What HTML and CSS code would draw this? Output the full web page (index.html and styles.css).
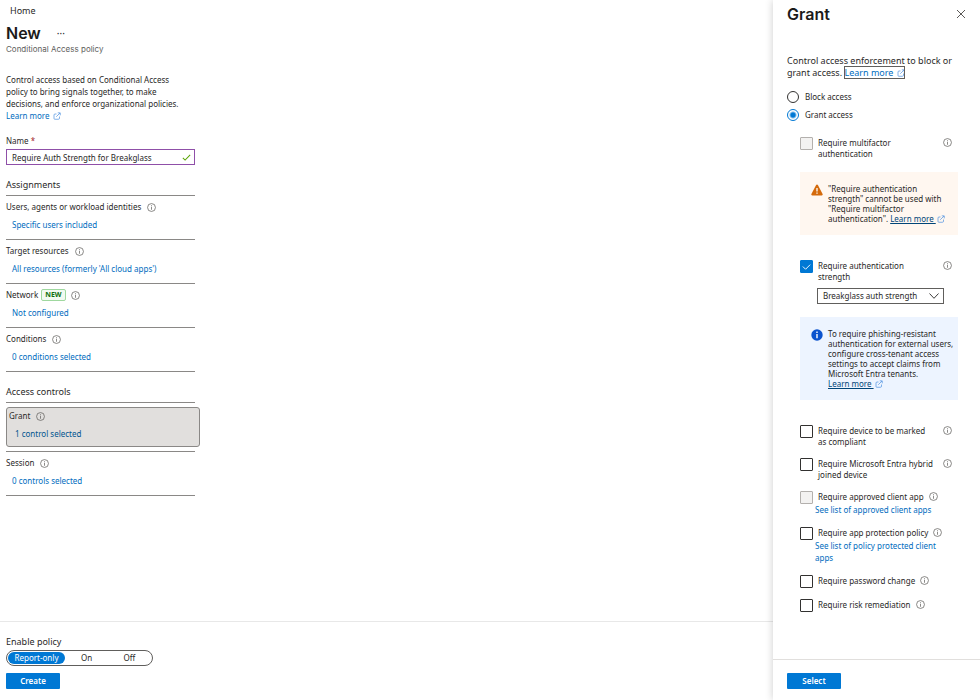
FILE: index.html
```html
<!DOCTYPE html>
<html lang="en">
<head>
  <meta charset="UTF-8" />
  <meta name="viewport" content="width=device-width, initial-scale=1.0" />
  <title>New - Conditional Access policy</title>
  <link rel="stylesheet" href="styles.css">
</head>
<body>
  <!-- shared icons -->
  <svg class="sprite" aria-hidden="true">
    <symbol id="info" viewBox="0 0 16 16">
      <circle cx="8" cy="8" r="7" fill="none" stroke="currentColor" stroke-width="1.3" />
      <path d="M8 7v5" stroke="currentColor" stroke-width="1.3" />
      <circle cx="8" cy="4.8" r=".9" fill="currentColor" />
    </symbol>
    <symbol id="external" viewBox="0 0 16 16">
      <path d="M7 4H4a2 2 0 0 0-2 2v7a1.5 1.5 0 0 0 1.5 1.5H11a2 2 0 0 0 2-2V9M6.5 9.5 14 2M9.5 1.7h5v5" fill="none" stroke="currentColor" stroke-width="1.4" />
    </symbol>
    <symbol id="check" viewBox="0 0 16 16">
      <path d="M1.5 8.5 5.5 12.5 14.5 3.5" fill="none" stroke="currentColor" stroke-width="1.8" />
    </symbol>
  </svg>

  <div class="page">
    <main class="policy">
      <div class="policy-body">
        <nav><a class="home" href="#">Home</a></nav>
        <div class="title-row">
          <h1>New</h1>
          <button class="more" type="button" aria-label="More">···</button>
        </div>
        <p class="subtitle">Conditional Access policy</p>

        <p class="intro">Control access based on Conditional Access policy to bring signals together, to make decisions, and enforce organizational policies.<br>
          <a href="#">Learn more <svg class="ext"><use href="#external" /></svg></a></p>

        <label class="name-label" for="policyName">Name <span class="required">*</span></label>
        <div class="name-field">
          <input type="text" id="policyName" value="Require Auth Strength for Breakglass" />
          <svg class="valid"><use href="#check" /></svg>
        </div>

        <h2>Assignments</h2>
        <section class="item">
          <div class="item-label">Users, agents or workload identities <svg class="info"><use href="#info" /></svg></div>
          <a href="#">Specific users included</a>
        </section>
        <section class="item">
          <div class="item-label">Target resources <svg class="info"><use href="#info" /></svg></div>
          <a href="#">All resources (formerly 'All cloud apps')</a>
        </section>
        <section class="item">
          <div class="item-label network">Network <span class="tag">NEW</span> <svg class="info"><use href="#info" /></svg></div>
          <a href="#">Not configured</a>
        </section>
        <section class="item">
          <div class="item-label">Conditions <svg class="info"><use href="#info" /></svg></div>
          <a href="#">0 conditions selected</a>
        </section>

        <h2>Access controls</h2>
        <section class="item selected">
          <div class="item-label">Grant <svg class="info"><use href="#info" /></svg></div>
          <a href="#">1 control selected</a>
        </section>
        <section class="item session">
          <div class="item-label">Session <svg class="info"><use href="#info" /></svg></div>
          <a href="#">0 controls selected</a>
        </section>
      </div>

      <footer class="policy-footer">
        <fieldset>
          <legend>Enable policy</legend>
          <div class="toggle">
            <label><input type="radio" name="enable" checked />Report-only</label>
            <label><input type="radio" name="enable" />On</label>
            <label><input type="radio" name="enable" />Off</label>
          </div>
        </fieldset>
        <button class="primary" type="button">Create</button>
      </footer>
    </main>

    <aside class="panel">
      <div class="panel-body">
        <header>
          <h1>Grant</h1>
          <button class="close" type="button" aria-label="Close">
            <svg viewBox="0 0 10 10"><path d="M1 1 9 9M9 1 1 9" stroke="currentColor" stroke-width=".9" /></svg>
          </button>
        </header>

        <p class="panel-intro">Control access enforcement to block or grant access. <a class="focused" href="#">Learn more <svg class="ext"><use href="#external" /></svg></a></p>

        <div class="radios">
          <label><input type="radio" name="access" />Block access</label>
          <label><input type="radio" name="access" checked />Grant access</label>
        </div>

        <div class="controls">
          <div class="control spread">
            <input type="checkbox" id="mfa" disabled />
            <label for="mfa">Require multifactor authentication</label>
            <svg class="info"><use href="#info" /></svg>
          </div>

          <div class="notice warning">
            <svg class="notice-icon" viewBox="0 0 12 12">
              <path d="M6 .5c.4 0 .7.2.9.6l4.7 8.9c.3.7-.1 1.5-.9 1.5H1.3c-.8 0-1.2-.8-.9-1.5L5.1 1.1C5.3.7 5.6.5 6 .5Z" fill="#d46a0b" />
              <path d="M6 4v3.5M6 8.5v1.3" stroke="#fff" stroke-width="1.3" />
            </svg>
            <p>"Require authentication strength" cannot be used with "Require multifactor authentication". <a href="#"><span>Learn more </span><svg class="ext"><use href="#external" /></svg></a></p>
          </div>

          <div class="control spread">
            <input type="checkbox" id="strength" checked />
            <label for="strength">Require authentication strength</label>
            <svg class="info"><use href="#info" /></svg>
          </div>
          <div class="select">
            <select aria-label="Authentication strength">
              <option>Breakglass auth strength</option>
            </select>
            <svg viewBox="0 0 10 10"><path d="M.5 2.5 5 7.3 9.5 2.5" fill="none" stroke="currentColor" stroke-width=".9" /></svg>
          </div>

          <div class="notice note">
            <svg class="notice-icon" viewBox="0 0 12 12">
              <circle cx="6" cy="6" r="5.7" fill="#0b53ce" />
              <path d="M6 5v4.2M6 2.6v1.4" stroke="#fff" stroke-width="1.4" />
            </svg>
            <p>To require phishing-resistant authentication for external users, configure cross-tenant access settings to accept claims from Microsoft Entra tenants.<br>
              <a href="#"><span>Learn more </span><svg class="ext"><use href="#external" /></svg></a></p>
          </div>

          <div class="control spread">
            <input type="checkbox" id="compliant" />
            <label for="compliant">Require device to be marked as compliant</label>
            <svg class="info"><use href="#info" /></svg>
          </div>
          <div class="control spread">
            <input type="checkbox" id="hybrid" />
            <label for="hybrid">Require Microsoft Entra hybrid joined device</label>
            <svg class="info"><use href="#info" /></svg>
          </div>
          <div class="control">
            <input type="checkbox" id="approved" disabled />
            <label for="approved">Require approved client app</label>
            <svg class="info"><use href="#info" /></svg>
          </div>
          <a class="app-list" href="#">See list of approved client apps</a>
          <div class="control">
            <input type="checkbox" id="protection" />
            <label for="protection">Require app protection policy</label>
            <svg class="info"><use href="#info" /></svg>
          </div>
          <a class="app-list" href="#">See list of policy protected client apps</a>
          <div class="control">
            <input type="checkbox" id="password" />
            <label for="password">Require password change</label>
            <svg class="info"><use href="#info" /></svg>
          </div>
          <div class="control">
            <input type="checkbox" id="risk" />
            <label for="risk">Require risk remediation</label>
            <svg class="info"><use href="#info" /></svg>
          </div>
        </div>
      </div>
      <footer class="panel-footer">
        <button class="primary" type="button">Select</button>
      </footer>
    </aside>
  </div>
</body>
</html>
```
FILE: styles.css
```css
* {
  box-sizing: border-box;
}
body {
  margin: 0;
  font-family: "Noto Sans", "Open Sans", sans-serif;
  font-size: 8px;
  line-height: 12px;
  color: #292827;
  background: #fff;
}
h1, h2, p, fieldset, legend {
  margin: 0;
  padding: 0;
  border: 0;
}
button, input, select {
  font: inherit;
  color: inherit;
  margin: 0;
}
a {
  color: #006cbe;
  text-decoration: none;
}
h1 {
  font-family: Inter, sans-serif;
  font-size: 16px;
  line-height: 20px;
  font-weight: 600;
  color: #1b1a19;
}
h2 {
  font-size: 9px;
  line-height: 12px;
  font-weight: 400;
}
.sprite {
  display: none;
}
.info {
  width: 9px;
  height: 9px;
  flex: none;
  color: #605e5c;
}
.ext {
  width: 8px;
  height: 8px;
  margin-left: 1px;
  vertical-align: -1px;
  color: #4a8fe0;
}
.page {
  display: flex;
  min-height: 100vh;
}
.primary {
  width: 54px;
  height: 16px;
  padding: 0;
  border: 0;
  border-radius: 1px;
  background: #0078d4;
  color: #fff;
  font-weight: 600;
}

/* policy form */
.policy {
  flex: 1;
  display: flex;
  flex-direction: column;
}
.policy-body {
  flex: 1;
  width: 201px;
  padding: 5px 6px 0;
}
.home {
  display: block;
  margin-left: 4px;
  font-size: 9px;
  color: #292827;
}
.title-row {
  display: flex;
  gap: 16px;
  margin-top: 6px;
}
.more {
  padding: 0;
  border: 0;
  background: none;
  font-size: 10px;
  line-height: 20px;
}
.subtitle {
  font-family: Inter, sans-serif;
  font-size: 8px;
  color: #605e5c;
}
.intro {
  max-width: 184px;
  margin-top: 19px;
}
.name-label {
  display: block;
  margin-top: 13px;
}
.required {
  color: #a4262c;
}
.name-field {
  display: grid;
  align-items: center;
  margin-top: 2px;
}
.name-field input {
  grid-area: 1 / 1;
  width: 100%;
  height: 16px;
  padding: 0 20px 0 5px;
  border: 1px solid #8f4fa8;
  background: #fff;
}
.valid {
  grid-area: 1 / 1;
  justify-self: end;
  width: 9px;
  height: 9px;
  margin-right: 4px;
  color: #57a300;
}
.policy h2 {
  padding: 14px 0 4px;
  border-bottom: 1px solid #8a8886;
}
.item {
  display: flex;
  flex-direction: column;
  align-items: flex-start;
  gap: 6px;
  padding: 5px 0 8px;
  border-bottom: 1px solid #8a8886;
}
.item a {
  margin-left: 6px;
}
.item-label {
  display: flex;
  align-items: center;
  gap: 6px;
}
.network {
  gap: 3px;
}
.tag {
  height: 12px;
  margin-right: 2px;
  padding: 0 3px;
  border: 1px solid #9fd89f;
  border-radius: 2px;
  background: #f1faf1;
  color: #0e700e;
  font-size: 7px;
  line-height: 10px;
  font-weight: 700;
}
.item.selected {
  margin: 4px -5px 4px 0;
  padding: 2px 2px 6px;
  border: 1px solid #8a8886;
  border-radius: 3px;
  background: #e1dfdd;
}
.selected a {
  color: #00548f;
}
.session {
  border-top: 1px solid #8a8886;
}
.policy-footer {
  padding: 14px 6px 11px;
  border-top: 1px solid #e8e8e8;
}
fieldset {
  display: flex;
  flex-direction: column;
}
legend {
  font-size: 9px;
}
.toggle {
  display: inline-flex;
  width: 147px;
  height: 16px;
  margin: 2px 0 7px;
  padding: 1px;
  border: 1px solid #605e5c;
  border-radius: 8px;
}
.toggle label {
  flex: 1;
  border-radius: 6px;
  text-align: center;
}
.toggle label:first-child {
  flex: 0 0 57px;
}
.toggle label:has(:checked) {
  background: #0078d4;
  color: #fff;
}
.toggle input {
  position: absolute;
  opacity: 0;
}

/* grant panel */
.panel {
  width: 207px;
  display: flex;
  flex-direction: column;
  background: #fff;
  box-shadow: 0 0 8px rgba(0,0,0,0.2);
}
.panel-body {
  flex: 1;
  padding: 4px 14px 0;
}
.panel header {
  display: flex;
  justify-content: space-between;
}
.close {
  padding: 0;
  border: 0;
  background: none;
  color: #484644;
}
.close svg {
  display: block;
  width: 10px;
  height: 10px;
}
.panel-intro {
  margin-top: 31px;
  font-size: 9px;
}
.focused {
  outline: 1px solid #605e5c;
  outline-offset: -1px;
}
.radios {
  display: grid;
  gap: 6px;
  margin-top: 12px;
}
.radios label {
  display: flex;
  align-items: center;
  gap: 6px;
}
.radios input {
  appearance: none;
  width: 12px;
  height: 12px;
  border: 1px solid #323130;
  border-radius: 50%;
}
.radios input:checked {
  border-color: #0078d4;
  background: radial-gradient(circle, #0078d4 2px, #fff 4px);
}
.controls {
  margin: 16px 7px 0 13px;
}
.control {
  display: flex;
  align-items: flex-start;
  gap: 5px;
  line-height: 11px;
}
.control input {
  appearance: none;
  flex: none;
  width: 13px;
  height: 13px;
  border: 1px solid #323130;
  border-radius: 1px;
  background: #fff;
}
.control input:disabled {
  border-color: #b3b0ad;
  background: #f3f2f1;
}
.control input:checked {
  border-color: #0078d4;
  background: #0078d4 url("data:image/svg+xml,%3Csvg xmlns='http://www.w3.org/2000/svg' viewBox='0 0 12 12'%3E%3Cpath d='M2 6l3 3 5-5' fill='none' stroke='white'/%3E%3C/svg%3E");
}
.control .info {
  margin-top: 1px;
}
.spread label {
  width: 117px;
}
.spread .info {
  margin-left: 3px;
}
.notice {
  display: flex;
  gap: 5px;
  margin: 13px 1px 0 0;
  padding: 12px 6px 11px 11px;
  line-height: 10px;
}
.notice-icon {
  flex: none;
  width: 12px;
  height: 12px;
}
.notice a {
  color: #004578;
}
.notice a span {
  text-decoration: underline;
}
.warning {
  margin-bottom: 25px;
  background: #fff7f0;
}
.note {
  margin-bottom: 25px;
  padding-right: 1px;
  background: #edf4ff;
}
.select {
  display: grid;
  align-items: center;
  width: 127px;
  margin: 6px 0 0 17px;
}
.select select {
  grid-area: 1 / 1;
  appearance: none;
  height: 16px;
  padding: 0 5px;
  border: 1px solid #605e5c;
  background: #fff;
}
.select svg {
  grid-area: 1 / 1;
  justify-self: end;
  width: 10px;
  height: 10px;
  margin-right: 5px;
  pointer-events: none;
}
.control + .control {
  margin-top: 11px;
}
.app-list {
  display: block;
  max-width: 130px;
  margin: 0 0 11px 15px;
}
.panel-footer {
  padding: 13px 14px 11px;
  border-top: 1px solid #e1dfdd;
}
```
